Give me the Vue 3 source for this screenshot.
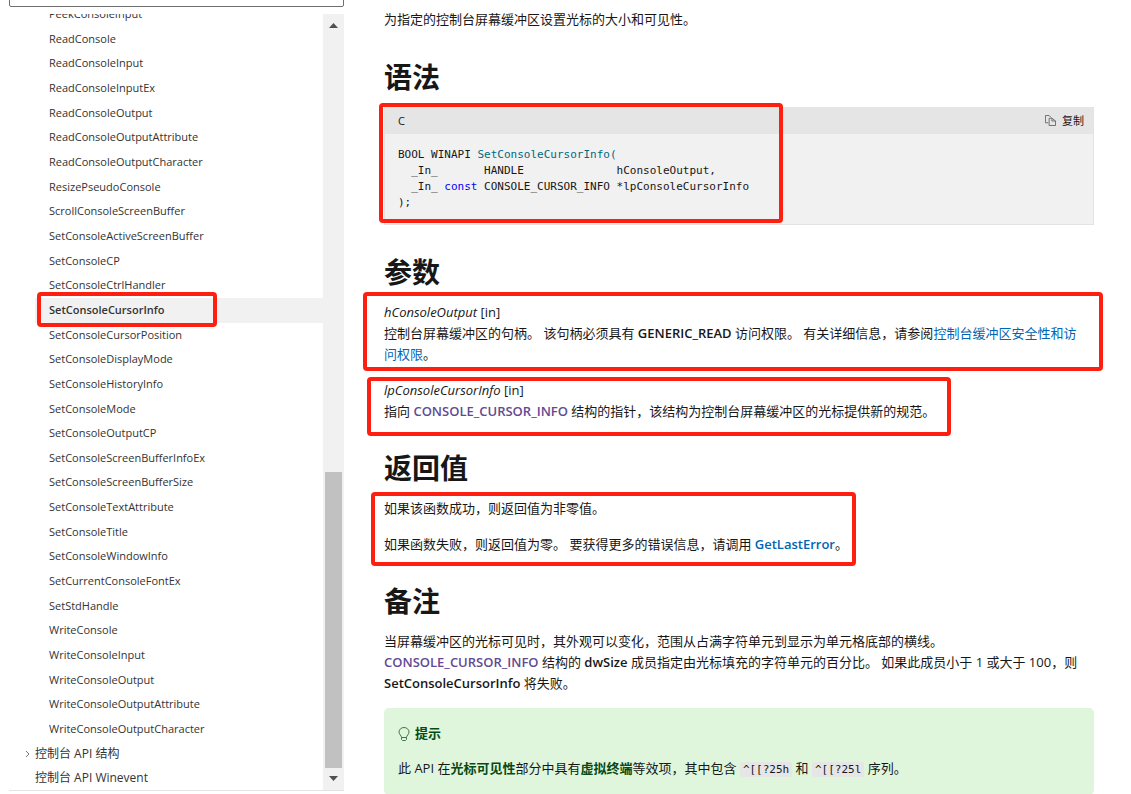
<script setup>
const entries = [
  'PeekConsoleInput', 'ReadConsole', 'ReadConsoleInput', 'ReadConsoleInputEx', 'ReadConsoleOutput',
  'ReadConsoleOutputAttribute', 'ReadConsoleOutputCharacter', 'ResizePseudoConsole',
  'ScrollConsoleScreenBuffer', 'SetConsoleActiveScreenBuffer', 'SetConsoleCP', 'SetConsoleCtrlHandler',
  'SetConsoleCursorInfo', 'SetConsoleCursorPosition', 'SetConsoleDisplayMode', 'SetConsoleHistoryInfo',
  'SetConsoleMode', 'SetConsoleOutputCP', 'SetConsoleScreenBufferInfoEx', 'SetConsoleScreenBufferSize',
  'SetConsoleTextAttribute', 'SetConsoleTitle', 'SetConsoleWindowInfo', 'SetCurrentConsoleFontEx',
  'SetStdHandle', 'WriteConsole', 'WriteConsoleInput', 'WriteConsoleOutput',
  'WriteConsoleOutputAttribute', 'WriteConsoleOutputCharacter'
]
const current = 'SetConsoleCursorInfo'
const code = {
  a: 'BOOL WINAPI ',
  fn: 'SetConsoleCursorInfo(',
  b: '\n  _In_       HANDLE              hConsoleOutput,\n  _In_ ',
  kw: 'const',
  c: ' CONSOLE_CURSOR_INFO *lpConsoleCursorInfo\n);'
}
</script>

<template>
  <div class="page" lang="zh-CN">
    <aside class="sidebar">
      <input class="filter" type="text" aria-label="按标题筛选" />
      <nav class="panel">
        <ul class="toc">
          <li v-for="name in entries" :key="name" class="leaf" :class="{ selected: name === current }">
            <a href="#">{{ name }}</a>
          </li>
          <li class="branch">
            <svg class="chevron" viewBox="0 0 8 8" aria-hidden="true"><path d="M2 1l3 3-3 3" fill="none" stroke="#777" /></svg>
            <a href="#">控制台 API 结构</a>
          </li>
          <li class="branch"><a href="#">控制台 API Winevent</a></li>
        </ul>
        <div class="scrollbar" aria-hidden="true">
          <svg viewBox="0 0 21 22"><path d="M6 14h9l-4.500-5z" fill="#505050" /></svg>
          <div class="space"></div>
          <div class="thumb"></div>
          <svg viewBox="0 0 21 22"><path d="M6 8h9l-4.500 5z" fill="#505050" /></svg>
        </div>
      </nav>
    </aside>

    <main class="content">
      <p class="summary">为指定的控制台屏幕缓冲区设置光标的大小和可见性。</p>

      <h2>语法</h2>
      <div class="code marked mark-code">
        <div class="code-head">
          <span>C</span>
          <button type="button" class="copy">
            <svg viewBox="0 0 12 12" fill="none" stroke="#666" aria-hidden="true">
              <path d="M3.500 8.500h-3v-8h4l2 2M4.500 3.500h3l4 3v5h-7zM7.500 3.500v3h4" />
            </svg>
            复制
          </button>
        </div>
        <pre><code>{{ code.a }}<span class="fn">{{ code.fn }}</span>{{ code.b }}<span class="kw">{{ code.kw }}</span>{{ code.c }}</code></pre>
      </div>

      <h2>参数</h2>
      <p class="marked mark-first"><em>hConsoleOutput</em> [in]<br />控制台屏幕缓冲区的句柄。 该句柄必须具有 <strong>GENERIC_READ</strong> 访问权限。 有关详细信息，请参阅<a href="#">控制台缓冲区安全性和访<br />问权限</a>。</p>
      <p class="marked mark-second"><em>lpConsoleCursorInfo</em> [in]<br />指向 <a href="#" class="visited"><strong>CONSOLE_CURSOR_INFO</strong></a> 结构的指针，该结构为控制台屏幕缓冲区的光标提供新的规范。</p>

      <h2>返回值</h2>
      <div class="marked mark-return">
        <p>如果该函数成功，则返回值为非零值。</p>
        <p>如果函数失败，则返回值为零。 要获得更多的错误信息，请调用 <a href="#"><strong>GetLastError</strong></a>。</p>
      </div>

      <h2>备注</h2>
      <p>当屏幕缓冲区的光标可见时，其外观可以变化，范围从占满字符单元到显示为单元格底部的横线。<br /><a href="#" class="visited"><strong>CONSOLE_CURSOR_INFO</strong></a> 结构的 <strong>dwSize</strong> 成员指定由光标填充的字符单元的百分比。 如果此成员小于 1 或大于 100，则<br /><strong>SetConsoleCursorInfo</strong> 将失败。</p>

      <section class="tip">
        <p class="tip-title">
          <svg viewBox="0 0 12 14" fill="none" stroke="#3f7549" aria-hidden="true">
            <path d="M3.500 10.500c0-2-2.500-3-2.500-5.500a5 4.500 0 0 1 10 0c0 2.500-2.500 3.500-2.500 5.500zM3.500 10.500v2l1 1h3l1-1v-2" />
          </svg>
          提示
        </p>
        <p>此 API 在<a href="#">光标可见性</a>部分中具有<a href="#">虚拟终端</a>等效项，其中包含 <code>^[[?25h</code> 和 <code>^[[?25l</code> 序列。</p>
      </section>
    </main>
  </div>
</template>

<style>
body {
  margin: 0;
  background: #fff;
}
</style>

<style scoped>
* {
  box-sizing: border-box;
}
.page {
  display: flex;
  align-items: flex-start;
  gap: 40px;
  padding: 0 37px 0 9px;
  color: #171717;
  font: 13px/21px "Open Sans", "Noto Sans CJK SC", sans-serif;
}
a {
  color: #0065b3;
  text-decoration: none;
}
.sidebar {
  display: flex;
  flex-direction: column;
  flex: none;
  width: 335px;
  height: 100vh;
  padding-bottom: 3px;
  overflow: hidden;
}
.filter {
  flex: none;
  width: 100%;
  height: 32px;
  margin: -25px 0 7px;
  border: 1px solid #707070;
  border-radius: 2px;
}
.panel {
  display: flex;
  flex: 1;
  align-items: flex-end;
  min-height: 0;
  overflow: hidden;
  border-bottom: 1px solid #e3e3e3;
}
.toc {
  display: grid;
  grid-auto-rows: 1fr;
  flex: 1;
  height: calc(100% + 13px);
  margin: 0 0 -1px;
  padding: 0;
  list-style: none;
  font-size: 11px;
  line-height: 24px;
}
.toc a {
  color: #333;
}
.leaf {
  margin-left: 26px;
  padding-left: 14px;
}
.branch {
  position: relative;
  padding-left: 26px;
  font-size: 12px;
}
.chevron {
  position: absolute;
  left: 15px;
  top: 8px;
  width: 8px;
  height: 8px;
}
.selected {
  position: relative;
  background: #f1f1f1;
  font-weight: 600;
}
.selected::after {
  content: "";
  position: absolute;
  z-index: 1;
  inset: -6px 106px -4px 2px;
  border: 4px solid #ff1f10;
  border-radius: 4px;
}
.scrollbar {
  display: flex;
  flex-direction: column;
  width: 21px;
  height: 100%;
  background: #f1f1f1;
}
.scrollbar svg {
  flex: none;
  width: 21px;
  height: 22px;
}
.space {
  flex: 436;
}
.thumb {
  flex: 296;
  margin: 0 2px;
  background: #c1c1c1;
}
.content {
  flex: 1;
  min-width: 0;
  padding-top: 9px;
}
p {
  margin: 0;
}
p + p {
  margin-top: 15px;
}
h2 {
  margin: 28px 0 12px;
  font-size: 28px;
  line-height: 36px;
  font-weight: 700;
}
.summary,
.code {
  margin-bottom: 29px;
}
strong {
  font-weight: 600;
}
.visited {
  color: #624a92;
}
.marked {
  position: relative;
}
.marked::after {
  content: "";
  position: absolute;
  pointer-events: none;
  border: 4px solid #ff1f10;
  border-radius: 4px;
}
.mark-code::after {
  inset: -4px 310px 1px -6px;
}
.mark-first::after {
  inset: -10px -9px -6px -21px;
}
.mark-second::after {
  inset: -3px 143px -14px -17px;
}
.mark-return::after {
  inset: -6px 238px -11px -13px;
}
.code {
  border: 1px solid #e3e3e3;
  border-top: 0;
  background: #f1f1f1;
}
.code-head {
  display: flex;
  align-items: center;
  justify-content: space-between;
  height: 27px;
  padding: 0 9px 0 13px;
  background: #e5e5e5;
  font-size: 11px;
}
.copy {
  display: flex;
  align-items: center;
  gap: 6px;
  padding: 0;
  border: 0;
  background: none;
  color: #171717;
  font: inherit;
}
.copy svg {
  width: 11px;
  height: 11px;
}
pre {
  margin: 0;
  padding: 13px;
  font-size: 11px;
  line-height: 16px;
}
code {
  font-family: "DejaVu Sans Mono", "Liberation Mono", monospace;
}
.fn {
  color: #006881;
}
.kw {
  color: #0101fd;
}
.tip {
  margin-top: 14px;
  padding: 15px 14px;
  border-radius: 5px;
  background: #dff6dd;
}
.tip p + p {
  margin-top: 14px;
}
.tip-title {
  display: flex;
  align-items: center;
  gap: 5px;
  color: #054b16;
  font-weight: 600;
}
.tip-title svg {
  width: 12px;
  height: 14px;
}
.tip a {
  color: #054b16;
  font-weight: 600;
}
.tip code {
  padding: 1px 3px;
  border-radius: 2px;
  background: #e6e6e6;
  font-size: 11px;
}
</style>
